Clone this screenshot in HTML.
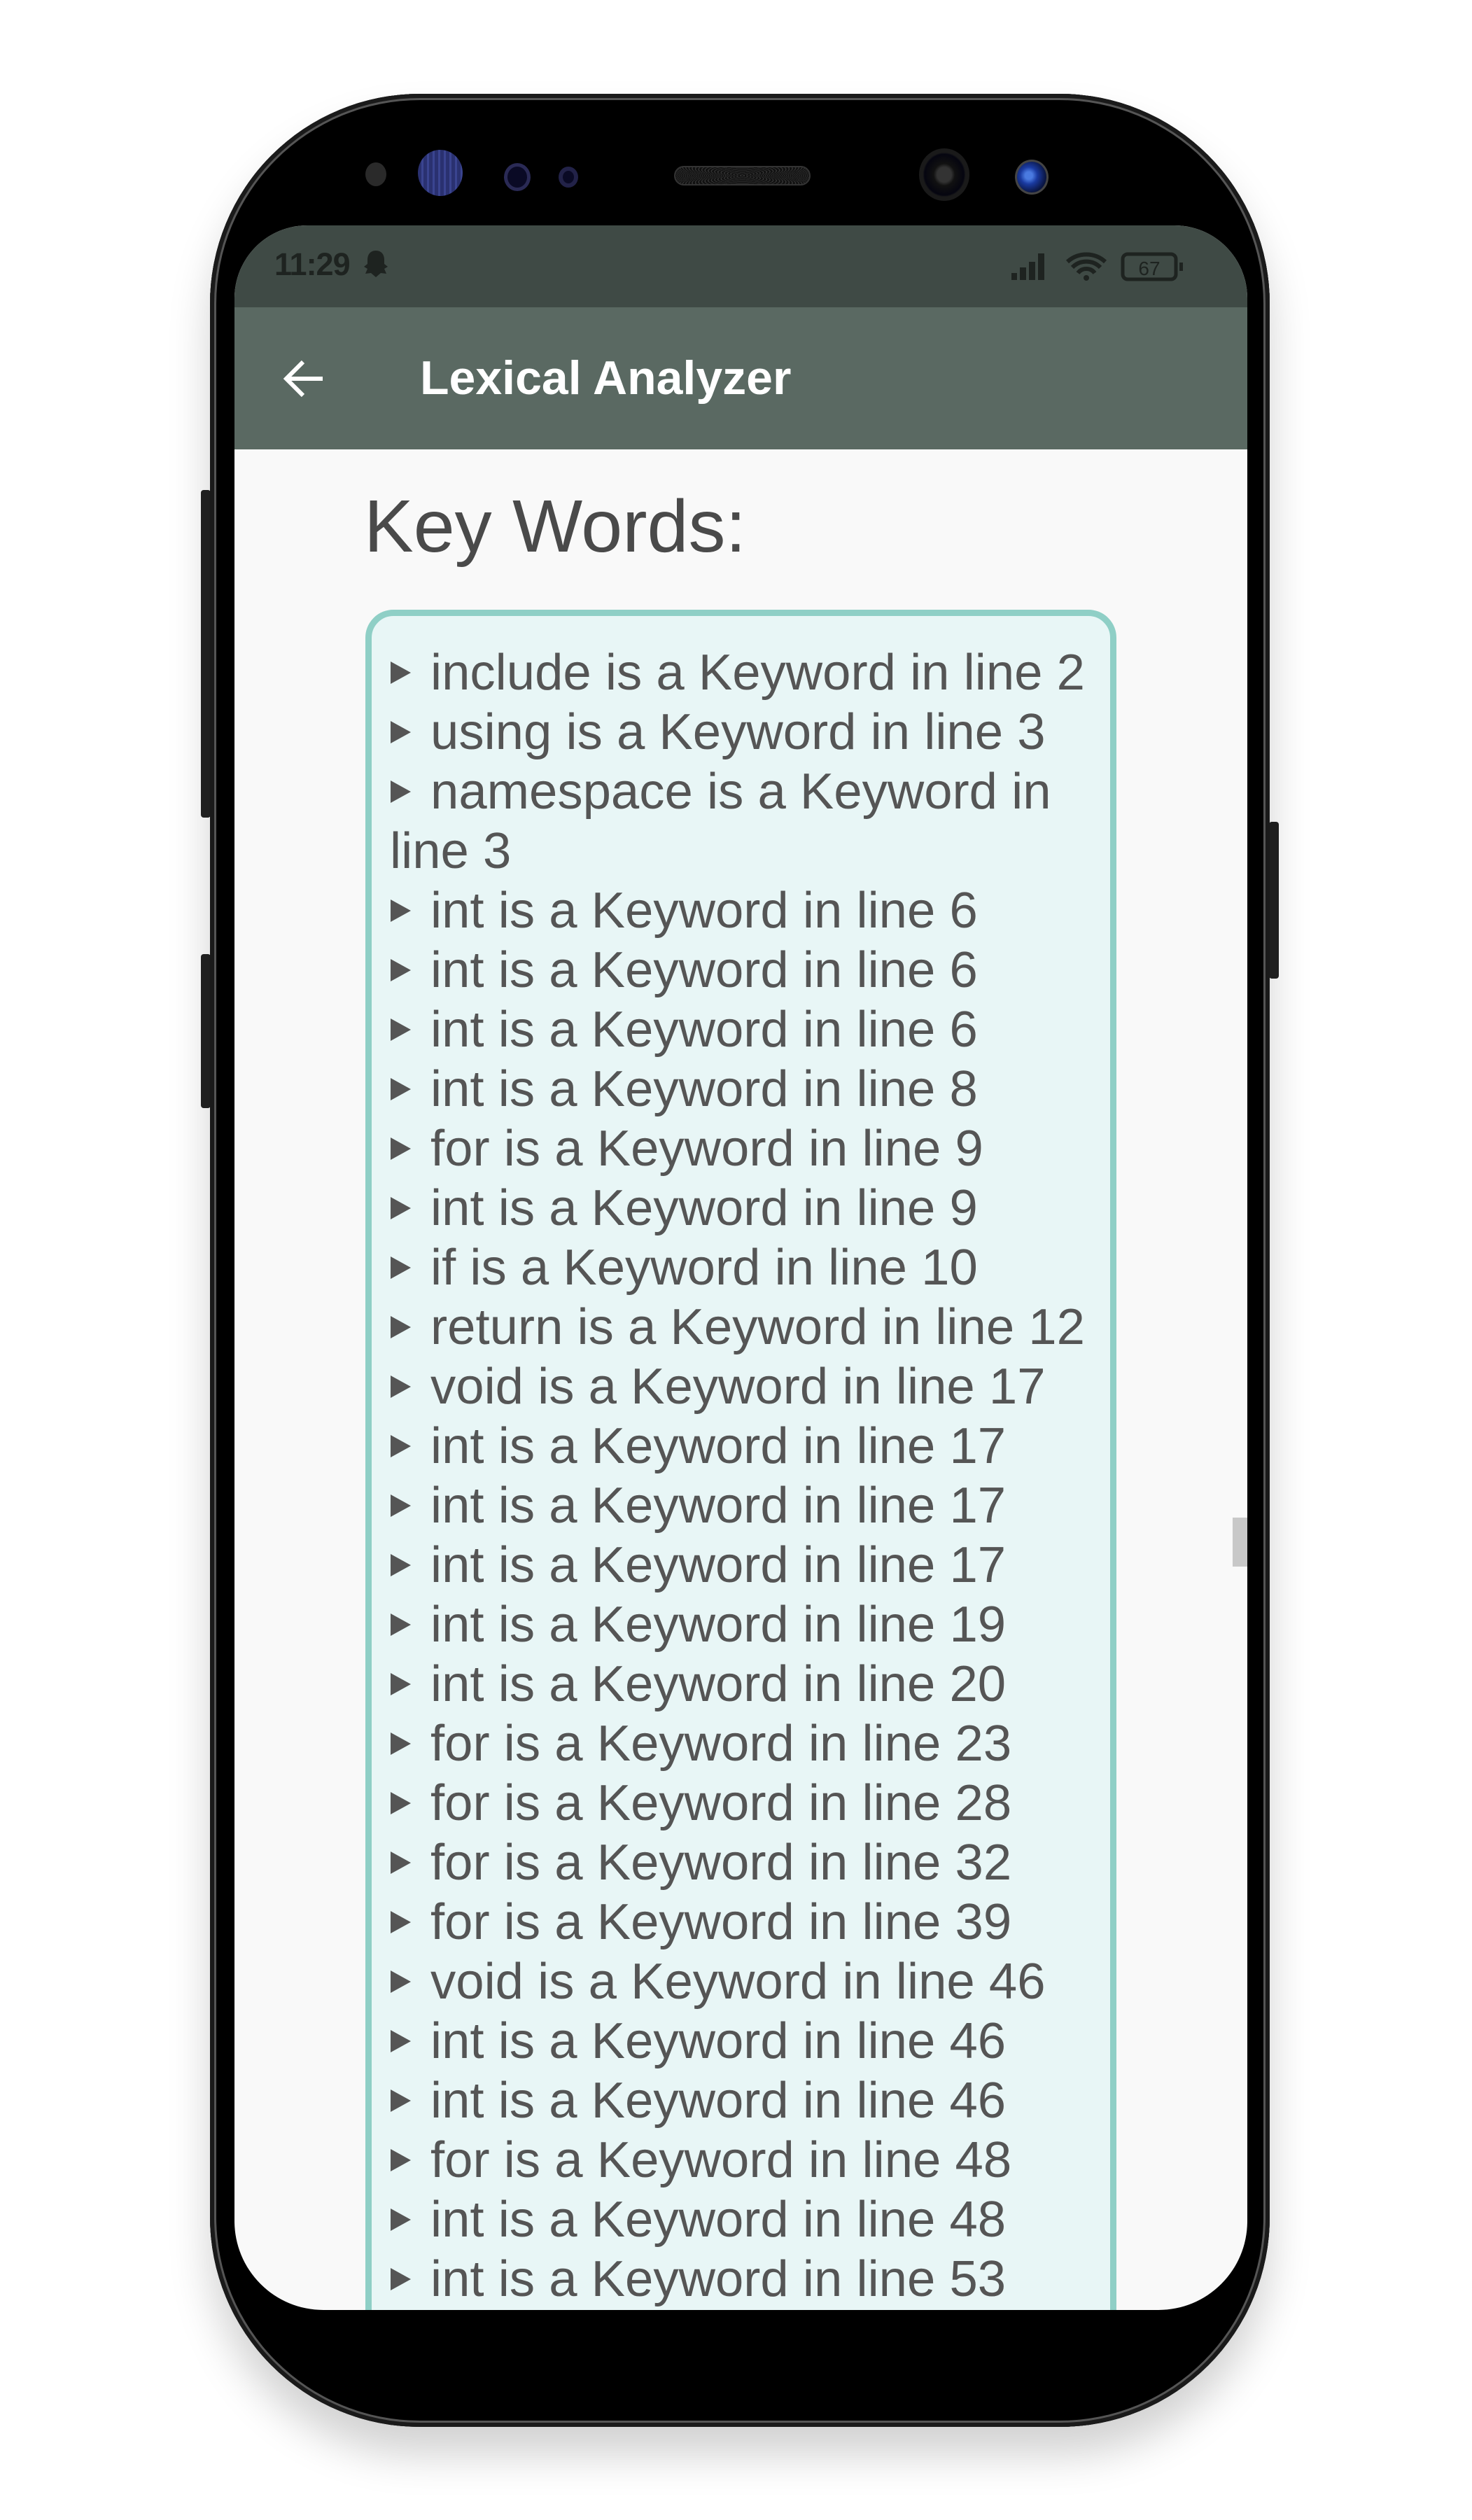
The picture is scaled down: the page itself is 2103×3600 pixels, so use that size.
<!DOCTYPE html>
<html><head><meta charset="utf-8">
<style>
*{margin:0;padding:0;box-sizing:border-box}
body{width:2103px;height:3600px;background:#fff;position:relative;overflow:hidden;font-family:"Liberation Sans",sans-serif}
.abs{position:absolute}
.phone{left:300px;top:134px;width:1514px;height:3333px;border-radius:300px;background:#000;box-shadow:0 40px 60px rgba(0,0,0,0.18),inset 0 0 0 6px #1a1a1a,inset 0 0 0 9px #555,inset 0 0 0 14px #000}
.btn{background:#222;border-radius:4px}
.screen{left:335px;top:322px;width:1447px;height:2978px;overflow:hidden;background:#f9f9f9;border-radius:104px 104px 127px 127px}
.status{left:0;top:0;width:100%;height:117px;background:#3f4a45}
.appbar{left:0;top:117px;width:100%;height:203px;background:#5a6962}
.title{left:265px;top:0;line-height:203px;color:#fff;font-size:68px;font-weight:bold}
.box{left:187px;top:549px;width:1073px;height:2600px;border:9px solid #8fcfc6;border-radius:40px;background:#e8f6f6}
.ln{position:absolute;left:0;white-space:nowrap;font-size:72.5px;color:#555;line-height:85px;height:85px}
.tri{position:absolute;left:36px;top:27px;width:0;height:0;border-top:16px solid transparent;border-bottom:16px solid transparent;border-left:29px solid #555}
.tx{position:absolute;left:93px;top:0}
</style></head><body>
<div class="abs btn" style="left:287px;top:700px;width:14px;height:468px"></div>
<div class="abs btn" style="left:287px;top:1363px;width:14px;height:220px"></div>
<div class="abs btn" style="left:1813px;top:1174px;width:14px;height:224px"></div>
<div class="abs phone"></div>
<div class="abs" style="left:522px;top:232px;width:30px;height:34px;border-radius:50%;background:#2a2a2a"></div>
<div class="abs" style="left:597px;top:214px;width:64px;height:66px;border-radius:50%;background:repeating-linear-gradient(90deg,#2a3170 0 5px,#3a4490 5px 8px)"></div>
<div class="abs" style="left:720px;top:233px;width:38px;height:40px;border-radius:50%;background:#0a0a25;border:5px solid #2a2a55"></div>
<div class="abs" style="left:798px;top:238px;width:28px;height:30px;border-radius:50%;background:#0a0a25;border:6px solid #222248"></div>
<div class="abs" style="left:963px;top:237px;width:195px;height:28px;border-radius:14px;background:repeating-radial-gradient(#333 0 1px,#111 1px 3px);border:2px solid #333"></div>
<div class="abs" style="left:1313px;top:212px;width:72px;height:75px;border-radius:50%;background:radial-gradient(#333 0 20%,#111 30%,#050510 55%,#1a1a1a 60%)"></div>
<div class="abs" style="left:1450px;top:228px;width:48px;height:50px;border-radius:50%;background:radial-gradient(circle at 40% 45%,#4a7ae0 0 15%,#1a3aa0 35%,#0a1540 70%);border:3px solid #444"></div>
<div class="abs screen">
  <div class="abs status">
    <div class="abs" style="left:57px;top:30px;font-size:45px;color:#1e2320;font-weight:bold;letter-spacing:-1px">11:29</div>
    <svg class="abs" style="left:182px;top:34px" width="40" height="44" viewBox="0 0 40 44"><path d="M20 2c8 0 12 6 12 13v6l5 4-5 3 3 7-8-1-7 6-7-6-8 1 3-7-5-3 5-4v-6C8 8 12 2 20 2z" fill="#1e2320"/></svg>
    <svg class="abs" style="left:1110px;top:38px" width="250" height="44" viewBox="0 0 250 44">
      <rect x="0" y="30" width="8" height="10" fill="#1e2320"/><rect x="12" y="22" width="9" height="18" fill="#1e2320"/><rect x="25" y="14" width="9" height="26" fill="#1e2320"/><rect x="38" y="2" width="9" height="38" fill="#1e2320"/>
      <path d="M80 14a40 40 0 0 1 54 0M87 22a28 28 0 0 1 40 0M95 30a15 15 0 0 1 24 0" stroke="#1e2320" stroke-width="6" fill="none"/><circle cx="107" cy="37" r="4" fill="#1e2320"/>
      <rect x="159" y="3" width="76" height="36" rx="7" fill="none" stroke="#1e2320" stroke-width="5"/><rect x="240" y="15" width="5" height="12" fill="#1e2320"/>
      <text x="197" y="33" font-size="28" text-anchor="middle" fill="#1e2320" font-family="Liberation Sans">67</text>
    </svg>
  </div>
  <div class="abs appbar">
    <svg class="abs" style="left:68px;top:74px" width="62" height="56" viewBox="0 0 62 56"><path d="M58 28H6M30 4L6 28l24 24" stroke="#fff" stroke-width="6" fill="none"/></svg>
    <div class="abs title">Lexical Analyzer</div>
  </div>
  <div class="abs" style="left:185px;top:365px;font-size:106px;color:#4a4a4a;line-height:130px">Key Words:</div>
  <div class="abs box">
    <div class="abs" style="left:-9px;top:-11px;width:1073px">
<div class="ln" style="top:49px"><div class="tri"></div><span class="tx">include is a Keyword in line 2</span></div>
<div class="ln" style="top:134px"><div class="tri"></div><span class="tx">using is a Keyword in line 3</span></div>
<div class="ln" style="top:219px"><div class="tri"></div><span class="tx">namespace is a Keyword in</span></div>
<div class="ln" style="top:304px"><span class="tx" style="left:35px">line 3</span></div>
<div class="ln" style="top:389px"><div class="tri"></div><span class="tx">int is a Keyword in line 6</span></div>
<div class="ln" style="top:474px"><div class="tri"></div><span class="tx">int is a Keyword in line 6</span></div>
<div class="ln" style="top:559px"><div class="tri"></div><span class="tx">int is a Keyword in line 6</span></div>
<div class="ln" style="top:644px"><div class="tri"></div><span class="tx">int is a Keyword in line 8</span></div>
<div class="ln" style="top:729px"><div class="tri"></div><span class="tx">for is a Keyword in line 9</span></div>
<div class="ln" style="top:814px"><div class="tri"></div><span class="tx">int is a Keyword in line 9</span></div>
<div class="ln" style="top:899px"><div class="tri"></div><span class="tx">if is a Keyword in line 10</span></div>
<div class="ln" style="top:984px"><div class="tri"></div><span class="tx">return is a Keyword in line 12</span></div>
<div class="ln" style="top:1069px"><div class="tri"></div><span class="tx">void is a Keyword in line 17</span></div>
<div class="ln" style="top:1154px"><div class="tri"></div><span class="tx">int is a Keyword in line 17</span></div>
<div class="ln" style="top:1239px"><div class="tri"></div><span class="tx">int is a Keyword in line 17</span></div>
<div class="ln" style="top:1324px"><div class="tri"></div><span class="tx">int is a Keyword in line 17</span></div>
<div class="ln" style="top:1409px"><div class="tri"></div><span class="tx">int is a Keyword in line 19</span></div>
<div class="ln" style="top:1494px"><div class="tri"></div><span class="tx">int is a Keyword in line 20</span></div>
<div class="ln" style="top:1579px"><div class="tri"></div><span class="tx">for is a Keyword in line 23</span></div>
<div class="ln" style="top:1664px"><div class="tri"></div><span class="tx">for is a Keyword in line 28</span></div>
<div class="ln" style="top:1749px"><div class="tri"></div><span class="tx">for is a Keyword in line 32</span></div>
<div class="ln" style="top:1834px"><div class="tri"></div><span class="tx">for is a Keyword in line 39</span></div>
<div class="ln" style="top:1919px"><div class="tri"></div><span class="tx">void is a Keyword in line 46</span></div>
<div class="ln" style="top:2004px"><div class="tri"></div><span class="tx">int is a Keyword in line 46</span></div>
<div class="ln" style="top:2089px"><div class="tri"></div><span class="tx">int is a Keyword in line 46</span></div>
<div class="ln" style="top:2174px"><div class="tri"></div><span class="tx">for is a Keyword in line 48</span></div>
<div class="ln" style="top:2259px"><div class="tri"></div><span class="tx">int is a Keyword in line 48</span></div>
<div class="ln" style="top:2344px"><div class="tri"></div><span class="tx">int is a Keyword in line 53</span></div>
    </div>
  </div>
  <div class="abs" style="left:1426px;top:1846px;width:21px;height:70px;background:#c8c8c8"></div>
</div>
</body></html>
